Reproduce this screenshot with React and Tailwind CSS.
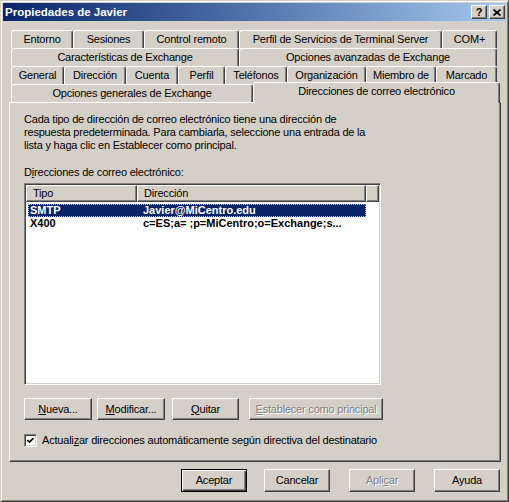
import React from "react";

const raised =
  "border border-t-white border-l-white border-r-[#404040] border-b-[#404040] shadow-[inset_-1px_-1px_#808080]";
const sunken =
  "border border-t-[#808080] border-l-[#808080] border-r-white border-b-white shadow-[inset_1px_1px_#404040,inset_-1px_-1px_#d4d0c8]";
const tab =
  "flex items-center justify-center h-[18px] border-t border-l border-r border-t-white border-l-white border-r-[#404040] shadow-[inset_-1px_0_#808080] rounded-t-[3px] whitespace-nowrap";
const disabled = "text-[#808080] [text-shadow:1px_1px_0_#fff]";

const rows = [
  [
    ["Entorno", "w-[62px]"],
    ["Sesiones", "w-[71px]"],
    ["Control remoto", "w-[95px]"],
    ["Perfil de Servicios de Terminal Server", "w-[203px]"],
    ["COM+", "w-[55px]"],
  ],
  [
    ["Características de Exchange", "w-[228px]"],
    ["Opciones avanzadas de Exchange", "w-[258px]"],
  ],
  [
    ["General", "w-[53px]"],
    ["Dirección", "w-[62px]"],
    ["Cuenta", "w-[52px]"],
    ["Perfil", "w-[47px]"],
    ["Teléfonos", "w-[62px]"],
    ["Organización", "w-[79px]"],
    ["Miembro de", "w-[70px]"],
    ["Marcado", "w-[61px]"],
  ],
];

function Btn({ className = "", children }) {
  return (
    <div className={`flex items-center justify-center bg-[#d4d0c8] ${raised} ${className}`}>
      {children}
    </div>
  );
}

export default function App() {
  return (
    <div className="w-[509px] h-[502px] bg-[#d4d0c8] border border-t-[#d4d0c8] border-l-[#d4d0c8] border-r-[#404040] border-b-[#404040] shadow-[inset_1px_1px_#fff,inset_-1px_-1px_#808080] p-[2px] text-[11px] leading-[13px] tracking-[-0.2px] text-black font-['Liberation_Sans',Arial,sans-serif] overflow-hidden select-none">
      {/* title bar */}
      <div className="h-[18px] flex items-center justify-between bg-gradient-to-r from-[#0a246a] to-[#a6caf0] pl-[2px] pr-[1px]">
        <span className="text-white font-bold text-[11.5px] tracking-normal">Propiedades de Javier</span>
        <div className="flex gap-[2px]">
          <Btn className="w-[16px] h-[14px] font-bold text-[11px] leading-none">?</Btn>
          <Btn className="w-[16px] h-[14px]">
            <svg width="8" height="7" viewBox="0 0 8 7">
              <path d="M0.5 0.5 L7.5 6.5 M7.5 0.5 L0.5 6.5" stroke="black" strokeWidth="1.7" />
            </svg>
          </Btn>
        </div>
      </div>

      <div className="pl-[6px] pr-[5px] pt-[9px]">
        {/* tab rows */}
        <div className="ml-[2px] w-[486px]">
          {rows.map((r, i) => (
            <div key={i} className="flex">
              {r.map(([label, w]) => (
                <div key={label} className={`${tab} ${w}`}>
                  {label}
                </div>
              ))}
            </div>
          ))}
          <div className="flex items-end h-[18px]">
            <div className={`${tab} w-[242px]`}>Opciones generales de Exchange</div>
            <div className="relative z-10 -mb-[1px] h-[21px] w-[247px] -mr-[3px] bg-[#d4d0c8] flex justify-center items-start pt-[2px] border-t border-l border-r border-t-white border-l-white border-r-[#404040] shadow-[inset_-1px_0_#808080] rounded-t-[3px] whitespace-nowrap">
              Direcciones de correo electrónico
            </div>
          </div>
        </div>

        {/* panel */}
        <div className={`w-[492px] h-[360px] ${raised} px-[14px] pt-[10px]`}>
          <p className="whitespace-nowrap">
            Cada tipo de dirección de correo electrónico tiene una dirección de
            <br />
            respuesta predeterminada. Para cambiarla, seleccione una entrada de la
            <br />
            lista y haga clic en Establecer como principal.
          </p>
          <div className="mt-[14px]">
            D<span className="underline">i</span>recciones de correo electrónico:
          </div>

          {/* list view */}
          <div className={`mt-[4px] w-[357px] h-[202px] bg-white ${sunken} p-[1px]`}>
            <div className="flex h-[17px]">
              <div className={`w-[111px] bg-[#d4d0c8] ${raised} pl-[6px] flex items-center`}>Tipo</div>
              <div className={`w-[229px] bg-[#d4d0c8] ${raised} pl-[6px] flex items-center`}>Dirección</div>
              <div className={`flex-1 bg-[#d4d0c8] ${raised}`} />
            </div>
            <div className="mt-[2px] ml-[2px] w-[338px] font-bold tracking-normal">
              <div className="flex h-[13px] items-center bg-[#0a246a] text-white outline outline-1 outline-dotted -outline-offset-1 outline-[#a6caf0]">
                <span className="w-[113px] pl-[2px]">SMTP</span>
                <span className="pl-[2px]">Javier@MiCentro.edu</span>
              </div>
              <div className="flex h-[13px] items-center">
                <span className="w-[113px] pl-[2px]">X400</span>
                <span className="pl-[2px] whitespace-nowrap">c=ES;a= ;p=MiCentro;o=Exchange;s...</span>
              </div>
            </div>
          </div>

          {/* list buttons */}
          <div className="flex mt-[13px] h-[22px]">
            <Btn className="w-[68px]">
              <span><span className="underline">N</span>ueva...</span>
            </Btn>
            <Btn className="w-[68px] ml-[5px]">
              <span><span className="underline">M</span>odificar...</span>
            </Btn>
            <Btn className="w-[67px] ml-[7px]">
              <span><span className="underline">Q</span>uitar</span>
            </Btn>
            <Btn className={`w-[134px] ml-[10px] ${disabled}`}>
              <span><span className="underline">E</span>stablecer como principal</span>
            </Btn>
          </div>

          {/* checkbox */}
          <div className="flex items-center mt-[14px]">
            <div className={`w-[13px] h-[13px] bg-white ${sunken} flex items-center justify-center`}>
              <svg width="7" height="7" viewBox="0 0 7 7">
                <path d="M0.5 3 L2.5 5 L6.5 1" stroke="black" strokeWidth="1.6" fill="none" />
              </svg>
            </div>
            <span className="ml-[5px] whitespace-nowrap">
              Actuali<span className="underline">z</span>ar direcciones automáticamente según directiva del destinatario
            </span>
          </div>
        </div>

        {/* dialog buttons */}
        <div className="flex justify-end mt-[7px] h-[23px] pr-[1px]">
          <div className="w-[66px] flex items-center justify-center bg-[#d4d0c8] border border-black shadow-[inset_1px_1px_#fff,inset_-1px_-1px_#404040,inset_-2px_-2px_#808080]">
            Aceptar
          </div>
          <Btn className="w-[66px] ml-[17px]">Cancelar</Btn>
          <Btn className={`w-[66px] ml-[19px] ${disabled}`}>
            <span>Apli<span className="underline">c</span>ar</span>
          </Btn>
          <Btn className="w-[66px] ml-[19px]">Ayuda</Btn>
        </div>
      </div>
    </div>
  );
}
